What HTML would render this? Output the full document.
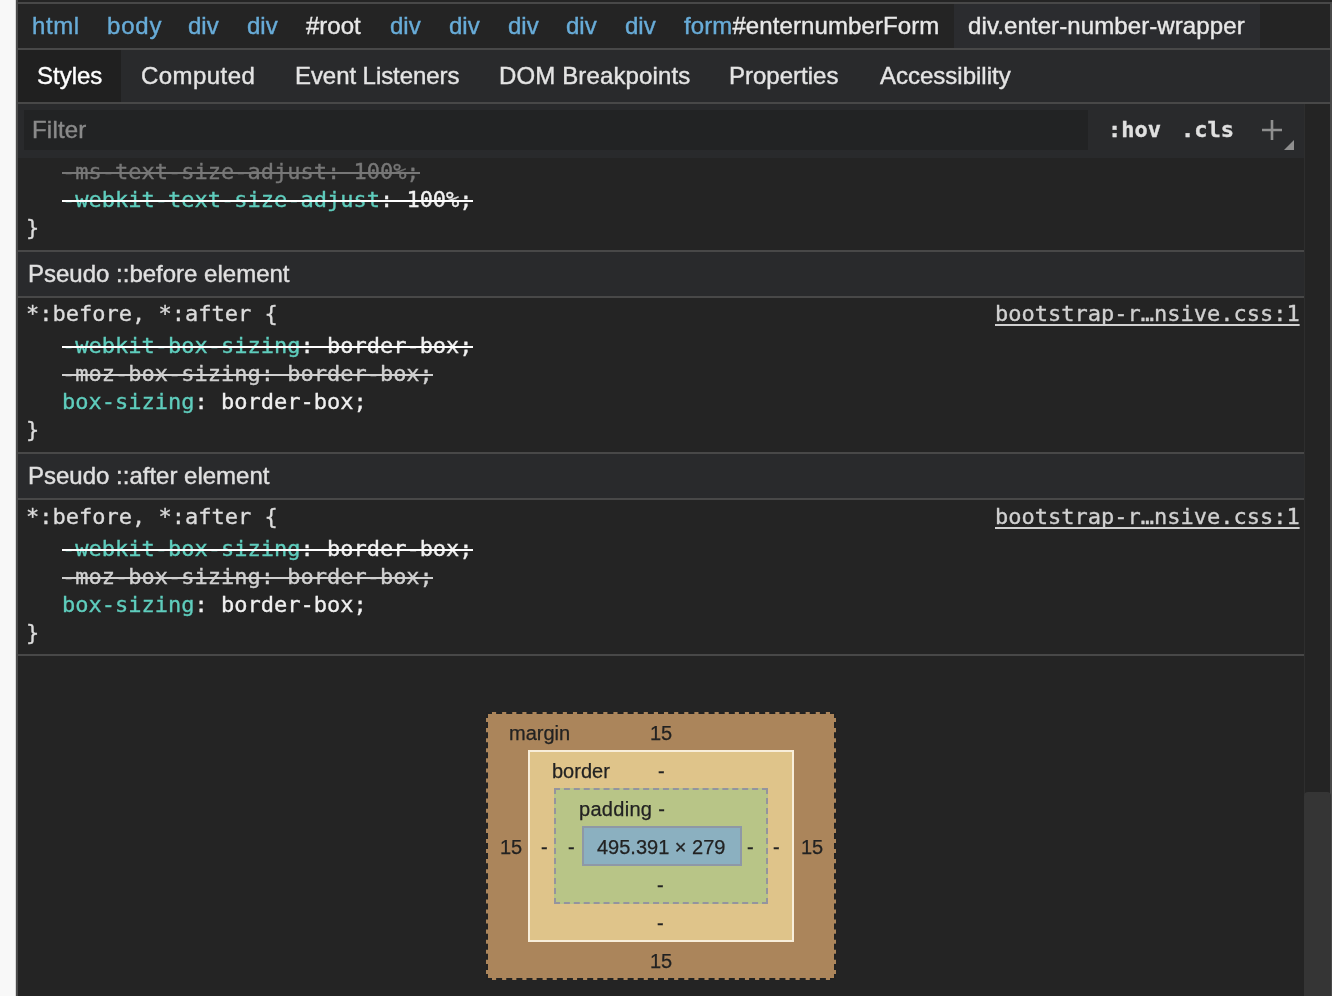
<!DOCTYPE html>
<html lang="en">
<head>
<meta charset="utf-8">
<title>DevTools Styles</title>
<style>
html,body{margin:0;padding:0;}
body{width:1332px;height:996px;overflow:hidden;background:#f8f8f8;position:relative;
  font-family:"Liberation Sans",Arial,sans-serif;font-size:24px;color:#e8e8e8;}
.abs{position:absolute;}
#panel{position:absolute;left:16px;top:0;width:1316px;height:996px;background:#242424;}
#lborder{position:absolute;left:15px;top:0;width:3px;height:996px;background:linear-gradient(90deg,#d8d8d8 0,#d8d8d8 1px,#4a4a4a 1px,#4a4a4a 3px);}
.hl{position:absolute;height:2px;background:#484848;}
.t{position:absolute;white-space:pre;line-height:28px;height:28px;will-change:transform;}
.ui{font-family:"Liberation Sans",Arial,sans-serif;font-size:24px;-webkit-text-stroke:0.4px currentColor;}
.mono{font-family:"DejaVu Sans Mono","Liberation Mono",monospace;font-size:22px;-webkit-text-stroke:0.35px currentColor;}
.crumb{color:#68acd8;}
.crumb.w{color:#e8e8e8;}
.tab{color:#e4e4e4;}
.st{position:absolute;height:2px;}
.teal{color:#5fcdbd;}
.wh{color:#f0f0f0;}
.sel{color:#dcdcdc;}
.gr{color:#d0d0d0;}
.dim{color:#777;}
.bm{position:absolute;box-sizing:border-box;}
.bt{position:absolute;white-space:pre;will-change:transform;font-size:20px;line-height:24px;color:#222;-webkit-text-stroke:0.25px currentColor;}
</style>
</head>
<body>
<div id="panel"></div>
<div id="lborder"></div>

<!-- top line -->
<div class="hl" style="left:18px;top:2px;width:1314px;"></div>
<!-- breadcrumbs -->
<div class="abs" style="left:18px;top:4px;width:1314px;height:44px;background:#242424;"></div>
<div class="abs" style="left:954px;top:4px;width:306px;height:44px;background:#2b2c2f;"></div>
<div class="t ui crumb" style="left:32px;top:12px;letter-spacing:.6px;">html</div>
<div class="t ui crumb" style="left:107px;top:12px;letter-spacing:.8px;">body</div>
<div class="t ui crumb" style="left:188px;top:12px;">div</div>
<div class="t ui crumb" style="left:247px;top:12px;">div</div>
<div class="t ui crumb w" style="left:306px;top:12px;">#root</div>
<div class="t ui crumb" style="left:390px;top:12px;">div</div>
<div class="t ui crumb" style="left:449px;top:12px;">div</div>
<div class="t ui crumb" style="left:508px;top:12px;">div</div>
<div class="t ui crumb" style="left:566px;top:12px;">div</div>
<div class="t ui crumb" style="left:625px;top:12px;">div</div>
<div class="t ui crumb" style="left:684px;top:12px;letter-spacing:.1px;">form<span style="color:#e8e8e8">#enternumberForm</span></div>
<div class="t ui crumb w" style="left:968px;top:12px;letter-spacing:.1px;">div.enter-number-wrapper</div>
<div class="hl" style="left:18px;top:48px;width:1314px;"></div>

<!-- tabs -->
<div class="abs" style="left:18px;top:50px;width:1314px;height:52px;background:#292a2c;"></div>
<div class="abs" style="left:18px;top:50px;width:103px;height:52px;background:#202020;"></div>
<div class="t ui tab" style="left:37px;top:62px;color:#fff;">Styles</div>
<div class="t ui tab" style="left:141px;top:62px;letter-spacing:.45px;">Computed</div>
<div class="t ui tab" style="left:295px;top:62px;letter-spacing:-.07px;">Event Listeners</div>
<div class="t ui tab" style="left:499px;top:62px;letter-spacing:.14px;">DOM Breakpoints</div>
<div class="t ui tab" style="left:729px;top:62px;">Properties</div>
<div class="t ui tab" style="left:880px;top:62px;">Accessibility</div>
<div class="hl" style="left:18px;top:102px;width:1314px;"></div>

<!-- filter row -->
<div class="abs" style="left:18px;top:104px;width:1286px;height:54px;background:#292a2c;"></div>
<div class="abs" style="left:24px;top:110px;width:1064px;height:40px;background:#222324;"></div>
<div class="t ui" style="left:31.5px;top:116px;color:#8a8a8a;letter-spacing:.2px;">Filter</div>
<div class="t mono" style="left:1107.7px;top:116px;font-weight:bold;color:#e0e0e0;">:hov</div>
<div class="t mono" style="left:1181px;top:116px;font-weight:bold;color:#e0e0e0;">.cls</div>
<svg class="abs" style="left:1260px;top:117px;" width="36" height="34" viewBox="0 0 36 34">
  <path d="M12 3v20M2 13h20" stroke="#8f8f8f" stroke-width="2.6" fill="none"/>
  <path d="M34 23v10H24z" fill="#8f8f8f"/>
</svg>

<!-- scrollbar -->
<div class="abs" style="left:1304px;top:104px;width:1px;height:892px;background:#2e2e2e;"></div>
<div class="abs" style="left:1330px;top:4px;width:2px;height:992px;background:#4a4a4a;"></div>
<div class="abs" style="left:1304px;top:792px;width:27px;height:210px;background:#353535;border-radius:4px;"></div>

<!-- first rule tail -->
<div class="t mono dim" style="left:62px;top:158px;">-ms-text-size-adjust: 100%;</div>
<div class="st" style="left:62px;top:172px;width:358px;background:#777;"></div>
<div class="t mono wh" style="left:62px;top:186px;"><span class="teal">-webkit-text-size-adjust</span>: 100%;</div>
<div class="st" style="left:62px;top:200px;width:411px;background:#fff;"></div>
<div class="t mono sel" style="left:26px;top:214px;">}</div>

<!-- Pseudo ::before -->
<div class="hl" style="left:18px;top:250px;width:1286px;"></div>
<div class="abs" style="left:18px;top:252px;width:1286px;height:44px;background:#292a2c;"></div>
<div class="t ui" style="left:28px;top:260px;color:#e0e0e0;">Pseudo ::before element</div>
<div class="hl" style="left:18px;top:296px;width:1286px;"></div>

<div class="t mono sel" style="left:26px;top:300px;">*:before, *:after {</div>
<div class="t mono gr" style="left:995.2px;top:300px;text-decoration:underline;text-decoration-skip-ink:none;text-decoration-thickness:1.5px;text-underline-offset:3px;">bootstrap-r…nsive.css:1</div>
<div class="t mono wh" style="left:62px;top:332px;"><span class="teal">-webkit-box-sizing</span>: border-box;</div>
<div class="st" style="left:62px;top:346px;width:411px;background:#fff;"></div>
<div class="t mono gr" style="left:62px;top:360px;">-moz-box-sizing: border-box;</div>
<div class="st" style="left:62px;top:374px;width:371px;background:#d0d0d0;"></div>
<div class="t mono wh" style="left:62px;top:388px;"><span class="teal">box-sizing</span>: border-box;</div>
<div class="t mono sel" style="left:26px;top:416px;">}</div>

<!-- Pseudo ::after -->
<div class="hl" style="left:18px;top:452px;width:1286px;"></div>
<div class="abs" style="left:18px;top:454px;width:1286px;height:44px;background:#292a2c;"></div>
<div class="t ui" style="left:28px;top:462px;color:#e0e0e0;">Pseudo ::after element</div>
<div class="hl" style="left:18px;top:498px;width:1286px;"></div>

<div class="t mono sel" style="left:26px;top:503px;">*:before, *:after {</div>
<div class="t mono gr" style="left:995.2px;top:503px;text-decoration:underline;text-decoration-skip-ink:none;text-decoration-thickness:1.5px;text-underline-offset:3px;">bootstrap-r…nsive.css:1</div>
<div class="t mono wh" style="left:62px;top:535px;"><span class="teal">-webkit-box-sizing</span>: border-box;</div>
<div class="st" style="left:62px;top:549px;width:411px;background:#fff;"></div>
<div class="t mono gr" style="left:62px;top:563px;">-moz-box-sizing: border-box;</div>
<div class="st" style="left:62px;top:577px;width:371px;background:#d0d0d0;"></div>
<div class="t mono wh" style="left:62px;top:591px;"><span class="teal">box-sizing</span>: border-box;</div>
<div class="t mono sel" style="left:26px;top:619px;">}</div>
<div class="hl" style="left:18px;top:654px;width:1286px;"></div>

<!-- box model -->
<div class="bm" style="left:486px;top:712px;width:350px;height:268px;background:#ab855b;border:2px dashed #222;"></div>
<div class="bm" style="left:528px;top:750px;width:266px;height:192px;background:#dfc48a;border:2px solid #f8eeda;"></div>
<div class="bm" style="left:554px;top:788px;width:214px;height:116px;background:#b8c587;border:2px dashed #94949e;"></div>
<div class="bm" style="left:582px;top:826px;width:160px;height:40px;background:#8bb0c0;border:2px solid #8e98a6;"></div>
<div class="bt" style="left:509.4px;top:721px;">margin</div>
<div class="bt" style="left:650.3px;top:721px;">15</div>
<div class="bt" style="left:552px;top:759px;">border</div>
<div class="bt" style="left:657.7px;top:759px;">-</div>
<div class="bt" style="left:578.9px;top:797px;letter-spacing:.3px;">padding -</div>
<div class="bt" style="left:597px;top:835px;">495.391 × 279</div>
<div class="bt" style="left:500px;top:835px;">15</div>
<div class="bt" style="left:541px;top:835px;">-</div>
<div class="bt" style="left:568px;top:835px;">-</div>
<div class="bt" style="left:747px;top:835px;">-</div>
<div class="bt" style="left:773px;top:835px;">-</div>
<div class="bt" style="left:801px;top:835px;">15</div>
<div class="bt" style="left:657px;top:873px;">-</div>
<div class="bt" style="left:657px;top:911px;">-</div>
<div class="bt" style="left:650.2px;top:949px;">15</div>
</body>
</html>
